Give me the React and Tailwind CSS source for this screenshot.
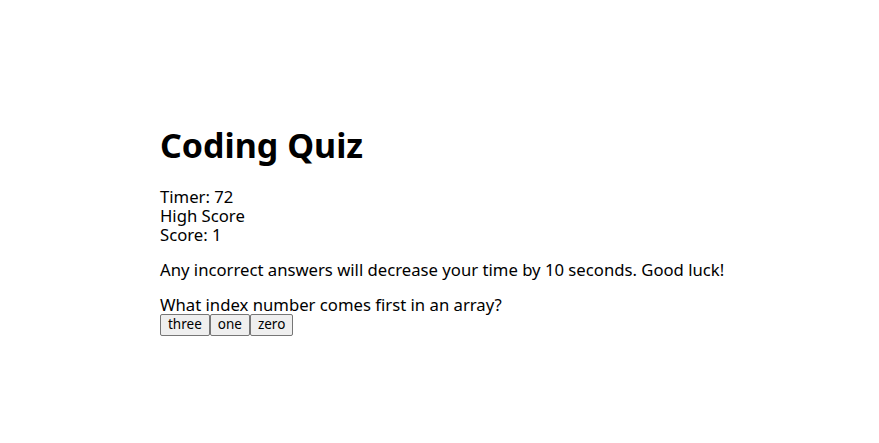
import React from "react";

const App = () => {
  const answers = ["three", "one", "zero"];
  return (
    <div className="w-full min-h-[443px] bg-white text-black font-['Noto_Sans',sans-serif] pl-[160px] pt-[123px]">
      <h1 className="text-[34px] font-bold leading-[44px]">Coding Quiz</h1>
      <div className="mt-[20px] text-[16.7px] leading-[19px]">
        <div>Timer: 72</div>
        <div>High Score</div>
        <div>Score: 1</div>
      </div>
      <p className="mt-[16px] text-[16.7px] leading-[19px]">
        Any incorrect answers will decrease your time by 10 seconds. Good luck!
      </p>
      <div className="mt-[16px] text-[16.7px] leading-[19px]">
        What index number comes first in an array?
      </div>
      <div className="flex">
        {answers.map((a) => (
          <button
            key={a}
            className="h-[22px] px-[7px] text-[13.5px] leading-none bg-[#efefef] border border-[#767676] rounded-[2px]"
          >
            {a}
          </button>
        ))}
      </div>
    </div>
  );
};

export default App;
